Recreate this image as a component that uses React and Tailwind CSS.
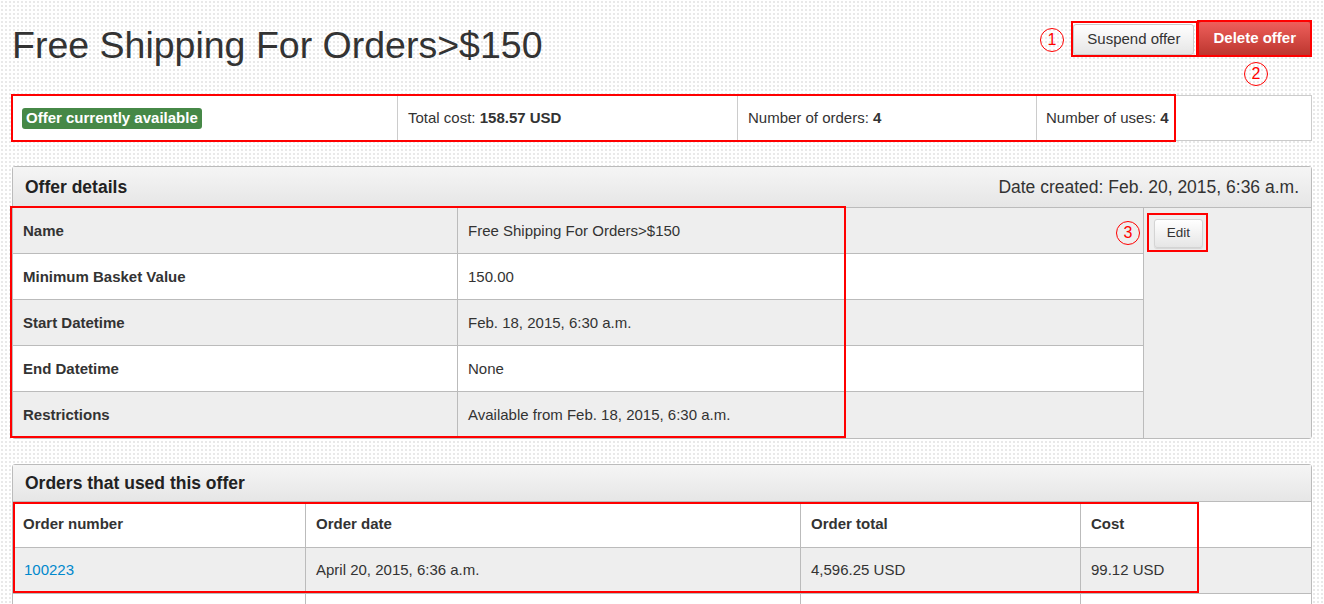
import React from "react";

const font = { fontFamily: '"Liberation Sans", Arial, sans-serif' };

function Circle({ n, className }) {
  return (
    <div
      className={
        "absolute w-[24px] h-[24px] rounded-full border-[1.5px] border-[#ff0000] text-[#ff0000] text-[16px] leading-none flex items-center justify-center bg-transparent " +
        className
      }
    >
      {n}
    </div>
  );
}

function DetailRow({ label, value, shaded, last }) {
  return (
    <div
      className={
        "flex h-[46px] " +
        (shaded ? "bg-[#eeeeee] " : "bg-white ") +
        (last ? "" : "border-b border-[#bbbbbb]")
      }
    >
      <div className="w-[445px] border-r border-[#bbbbbb] pl-[10px] pt-[1px] flex items-center font-bold text-[15px] text-[#333]">
        {label}
      </div>
      <div className="flex-1 pl-[10px] pt-[1px] flex items-center text-[15px] text-[#333]">
        {value}
      </div>
    </div>
  );
}

export default function App() {
  return (
    <div
      style={font}
      className="relative w-[1324px] h-[604px] overflow-hidden bg-white bg-[radial-gradient(circle,#e9e9e9_1px,transparent_1.2px)] bg-[length:4px_4px] px-[12px] text-[#333]"
    >
      {/* Header */}
      <div className="flex justify-between items-start h-[95px]">
        <h1 className="text-[37.5px] leading-none pt-[27px] text-[#333] font-normal">
          Free Shipping For Orders&gt;$150
        </h1>
        <div className="flex items-start pt-[21px] mr-[1px]">
          <button className="mt-[3px] h-[31px] px-[13px] text-[15px] text-[#333] rounded-[3px] border border-[#cccccc] bg-gradient-to-b from-white to-[#e6e6e6]">
            Suspend offer
          </button>
          <button className="ml-[4px] h-[35px] px-[14px] text-[15px] font-bold text-white rounded-[3px] border border-[#bd362f] bg-gradient-to-b from-[#ee5f5b] to-[#bd362f]">
            Delete offer
          </button>
        </div>
      </div>

      {/* Stats bar */}
      <div className="flex h-[46px] bg-white border border-[#cccccc] text-[15px]">
        <div className="w-[384px] flex items-center pl-[9px]">
          <span className="bg-[#468847] text-white font-bold px-[4px] h-[21px] flex items-center rounded-[3px]">
            Offer currently available
          </span>
        </div>
        <div className="w-[340px] border-l border-[#cccccc] flex items-center pl-[10px]">
          Total cost:&nbsp;<b>158.57 USD</b>
        </div>
        <div className="w-[299px] border-l border-[#cccccc] flex items-center pl-[10px]">
          Number of orders:&nbsp;<b>4</b>
        </div>
        <div className="flex-1 border-l border-[#cccccc] flex items-center pl-[9px]">
          Number of uses:&nbsp;<b>4</b>
        </div>
      </div>

      {/* Offer details panel */}
      <div className="mt-[25px] border border-[#bbbbbb] rounded-[3px] bg-white">
        <div className="h-[41px] flex items-center justify-between px-[12px] bg-gradient-to-b from-[#f5f5f5] to-[#e6e6e6] border-b border-[#bbbbbb]">
          <span className="font-bold text-[17.5px] text-[#222]">Offer details</span>
          <span className="text-[17.5px] text-[#333]">Date created: Feb. 20, 2015, 6:36 a.m.</span>
        </div>
        <div className="flex">
          <div className="w-[1130px]">
            <DetailRow label="Name" value="Free Shipping For Orders>$150" shaded />
            <DetailRow label="Minimum Basket Value" value="150.00" />
            <DetailRow label="Start Datetime" value="Feb. 18, 2015, 6:30 a.m." shaded />
            <DetailRow label="End Datetime" value="None" />
            <DetailRow label="Restrictions" value="Available from Feb. 18, 2015, 6:30 a.m." shaded last />
          </div>
          <div className="flex-1 bg-[#eeeeee] border-l border-[#bbbbbb] pt-[11px] pl-[10px]">
            <button className="h-[29px] w-[49px] text-[13.5px] text-[#333] rounded-[3px] border border-[#d4d4d4] bg-gradient-to-b from-white to-[#e6e6e6] shadow-[0_1px_1px_rgba(0,0,0,0.1)]">
              Edit
            </button>
          </div>
        </div>
      </div>

      {/* Orders panel */}
      <div className="mt-[25px] border border-[#bbbbbb] rounded-[3px] bg-white">
        <div className="h-[37px] flex items-center px-[12px] bg-gradient-to-b from-[#f5f5f5] to-[#e6e6e6] border-b border-[#bbbbbb]">
          <span className="font-bold text-[17.5px] text-[#222]">Orders that used this offer</span>
        </div>
        <div className="flex h-[46px] bg-white border-b border-[#bbbbbb] text-[15px] font-bold">
          <div className="w-[293px] border-r border-[#bbbbbb] pl-[10px] flex items-center">Order number</div>
          <div className="w-[495px] border-r border-[#bbbbbb] pl-[10px] flex items-center">Order date</div>
          <div className="w-[280px] border-r border-[#bbbbbb] pl-[10px] flex items-center">Order total</div>
          <div className="flex-1 pl-[10px] flex items-center">Cost</div>
        </div>
        <div className="flex h-[46px] bg-[#eeeeee] border-b border-[#bbbbbb] text-[15px]">
          <div className="w-[293px] border-r border-[#bbbbbb] pl-[11px] flex items-center text-[#0088cc]">100223</div>
          <div className="w-[495px] border-r border-[#bbbbbb] pl-[10px] flex items-center">April 20, 2015, 6:36 a.m.</div>
          <div className="w-[280px] border-r border-[#bbbbbb] pl-[10px] flex items-center">4,596.25 USD</div>
          <div className="flex-1 pl-[10px] flex items-center">99.12 USD</div>
        </div>
        <div className="flex h-[46px] bg-white text-[15px]">
          <div className="w-[293px] border-r border-[#bbbbbb]"></div>
          <div className="w-[495px] border-r border-[#bbbbbb]"></div>
          <div className="w-[280px] border-r border-[#bbbbbb]"></div>
          <div className="flex-1"></div>
        </div>
      </div>

      {/* Annotations */}
      <div className="absolute left-[1071px] top-[21px] w-[127px] h-[36px] border-2 border-[#ff0000] pointer-events-none" />
      <div className="absolute left-[1197px] top-[20px] w-[115px] h-[37px] border-2 border-[#ff0000] pointer-events-none" />
      <Circle n="1" className="left-[1040px] top-[28px]" />
      <Circle n="2" className="left-[1244px] top-[62px]" />
      <div className="absolute left-[11px] top-[94px] w-[1165px] h-[48px] border-2 border-[#ff0000] pointer-events-none" />
      <div className="absolute left-[10px] top-[206px] w-[836px] h-[232px] border-2 border-[#ff0000] pointer-events-none" />
      <div className="absolute left-[1147px] top-[213px] w-[61px] h-[39px] border-2 border-[#ff0000] pointer-events-none" />
      <Circle n="3" className="left-[1116px] top-[221px]" />
      <div className="absolute left-[13px] top-[502px] w-[1186px] h-[91px] border-2 border-[#ff0000] pointer-events-none" />
    </div>
  );
}
